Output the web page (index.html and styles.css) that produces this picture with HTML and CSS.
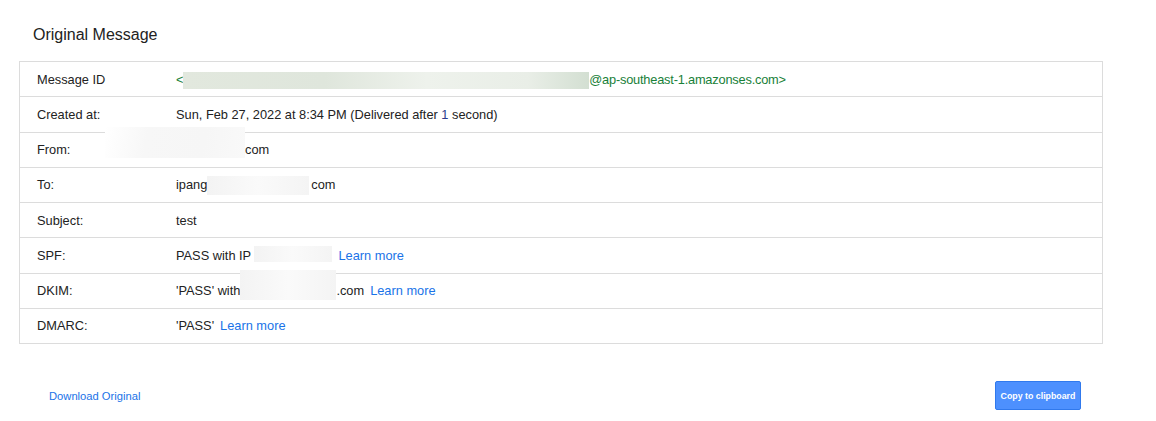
FILE: index.html
```html
<!DOCTYPE html>
<html>
<head>
<meta charset="utf-8">
<title>Original Message</title>
<link rel="stylesheet" href="styles.css">
</head>
<body>
<div class="wrap">
  <h1 class="title">Original Message</h1>
  <div class="table">
    <div class="row">
      <div class="label">Message ID</div>
      <div class="value green">&lt;<span class="redact r-msgid"></span>@ap-southeast-1.amazonses.com&gt;</div>
    </div>
    <div class="row">
      <div class="label">Created at:</div>
      <div class="value">Sun, Feb 27, 2022 at 8:34 PM (Delivered after <span class="num">1</span> second)</div>
    </div>
    <div class="row">
      <div class="label">From:</div>
      <div class="value"><span class="redact r-from"></span>com</div>
    </div>
    <div class="row">
      <div class="label">To:</div>
      <div class="value">ipang<span class="redact r-to"></span>com</div>
    </div>
    <div class="row">
      <div class="label">Subject:</div>
      <div class="value">test</div>
    </div>
    <div class="row">
      <div class="label">SPF:</div>
      <div class="value">PASS with IP <span class="redact r-spf"></span><a class="learn" href="#">Learn more</a></div>
    </div>
    <div class="row">
      <div class="label">DKIM:</div>
      <div class="value">'PASS' with<span class="redact r-dkim"></span>.com<a class="learn" href="#">Learn more</a></div>
    </div>
    <div class="row">
      <div class="label">DMARC:</div>
      <div class="value">'PASS'<a class="learn" href="#">Learn more</a></div>
    </div>
  </div>
  <div class="footer">
    <a class="download" href="#">Download Original</a>
    <button class="copy" type="button">Copy to clipboard</button>
  </div>
</div>
</body>
</html>
```

FILE: styles.css
```css
html, body {
  margin: 0;
  padding: 0;
  background: #ffffff;
}

body {
  font-family: "Liberation Sans", Arial, sans-serif;
  color: #222222;
}

.wrap {
  width: 1084px;
  padding-left: 19px;
}

.title {
  margin: 0;
  padding: 25px 0 0 14px;
  font-size: 16px;
  font-weight: normal;
  line-height: 20px;
  color: #222222;
}

.table {
  margin-top: 16px;
  border: 1px solid #dcdcdc;
  border-bottom: none;
}

.row {
  display: flex;
  align-items: center;
  box-sizing: border-box;
  height: 35.25px;
  border-bottom: 1px solid #dcdcdc;
  font-size: 12.8px;
}

.label {
  width: 139px;
  padding-left: 17px;
  flex: none;
  white-space: nowrap;
}

.value {
  white-space: nowrap;
}

.green {
  color: #188038;
  letter-spacing: -0.2px;
}

.num {
  color: #2a3a8c;
}

.learn {
  margin-left: 6px;
  color: #1a73e8;
  text-decoration: none;
  letter-spacing: 0;
}

.redact {
  display: inline-block;
  position: relative;
  height: 14px;
  vertical-align: -3px;
}

.redact::after {
  content: "";
  position: absolute;
  left: 0;
  right: 0;
  top: 0;
  bottom: 0;
  background: linear-gradient(90deg, #f3f3f3, #fafafa 50%, #f4f4f4);
}

.r-msgid {
  width: 406px;
}

.r-msgid::after {
  top: -1px;
  bottom: -2px;
  background: linear-gradient(90deg, #e2e8de 0%, #dfe6dc 35%, #eef2ec 60%, #e9eee7 85%, #d3dfd2 100%);
}

.r-from {
  width: 69px;
}

.r-from::after {
  left: -71px;
  top: -16px;
  bottom: -1px;
  background: linear-gradient(100deg, #ffffff 0%, #f7f7f7 30%, #f6f6f6 70%, #f9f9f9 100%);
}

.r-to {
  width: 104px;
}

.r-to::after {
  top: -2px;
  bottom: -3px;
  right: 2px;
}

.r-spf {
  width: 78px;
}

.r-spf::after {
  top: -3px;
  bottom: 1px;
}

.r-dkim {
  width: 96px;
}

.r-dkim::after {
  top: -14px;
  bottom: -2px;
}

.footer {
  display: flex;
  justify-content: space-between;
  align-items: center;
  margin-top: 37px;
  padding: 0 22px 0 30px;
}

.download {
  font-size: 11.2px;
  color: #1a73e8;
  text-decoration: none;
}

.copy {
  width: 86px;
  height: 29px;
  padding: 0;
  background: #4d90fe;
  border: 1px solid #3079ed;
  border-radius: 2px;
  color: #ffffff;
  font-family: "Liberation Sans", Arial, sans-serif;
  font-size: 8.8px;
  font-weight: bold;
}
```
